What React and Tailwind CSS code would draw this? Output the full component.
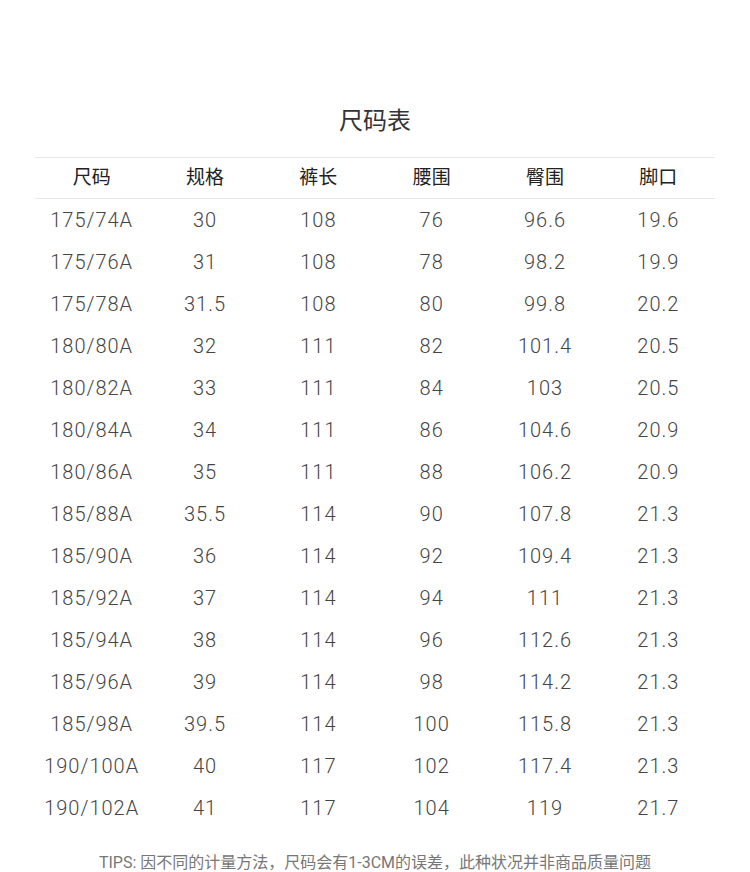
const headers = ["尺码", "规格", "裤长", "腰围", "臀围", "脚口"];

const rows = [
  ["175/74A", "30", "108", "76", "96.6", "19.6"],
  ["175/76A", "31", "108", "78", "98.2", "19.9"],
  ["175/78A", "31.5", "108", "80", "99.8", "20.2"],
  ["180/80A", "32", "111", "82", "101.4", "20.5"],
  ["180/82A", "33", "111", "84", "103", "20.5"],
  ["180/84A", "34", "111", "86", "104.6", "20.9"],
  ["180/86A", "35", "111", "88", "106.2", "20.9"],
  ["185/88A", "35.5", "114", "90", "107.8", "21.3"],
  ["185/90A", "36", "114", "92", "109.4", "21.3"],
  ["185/92A", "37", "114", "94", "111", "21.3"],
  ["185/94A", "38", "114", "96", "112.6", "21.3"],
  ["185/96A", "39", "114", "98", "114.2", "21.3"],
  ["185/98A", "39.5", "114", "100", "115.8", "21.3"],
  ["190/100A", "40", "117", "102", "117.4", "21.3"],
  ["190/102A", "41", "117", "104", "119", "21.7"],
];

export default function App() {
  return (
    <div className="w-[750px] h-[872px] bg-white font-['Roboto','Noto_Sans_CJK_SC',sans-serif] text-[#333]">
      <div className="pt-[105px] text-center text-[24px] leading-[32px] text-[#333]">
        尺码表
      </div>
      <div className="mx-[35px] mt-[20px]">
        <div className="grid grid-cols-6 h-[42px] items-center border-y border-[#e8e8e8] text-[19px] text-[#222]">
          {headers.map((h) => (
            <div key={h} className="text-center">{h}</div>
          ))}
        </div>
        {rows.map((r, i) => (
          <div key={i} className="grid grid-cols-6 h-[42px] items-center text-[20px] font-light text-[#444] tracking-[1px]">
            {r.map((c, j) => (
              <div key={j} className="text-center">{c}</div>
            ))}
          </div>
        ))}
      </div>
      <div className="mt-[22px] text-center text-[16px] text-[#777]">
        TIPS: 因不同的计量方法，尺码会有1-3CM的误差，此种状况并非商品质量问题
      </div>
    </div>
  );
}
